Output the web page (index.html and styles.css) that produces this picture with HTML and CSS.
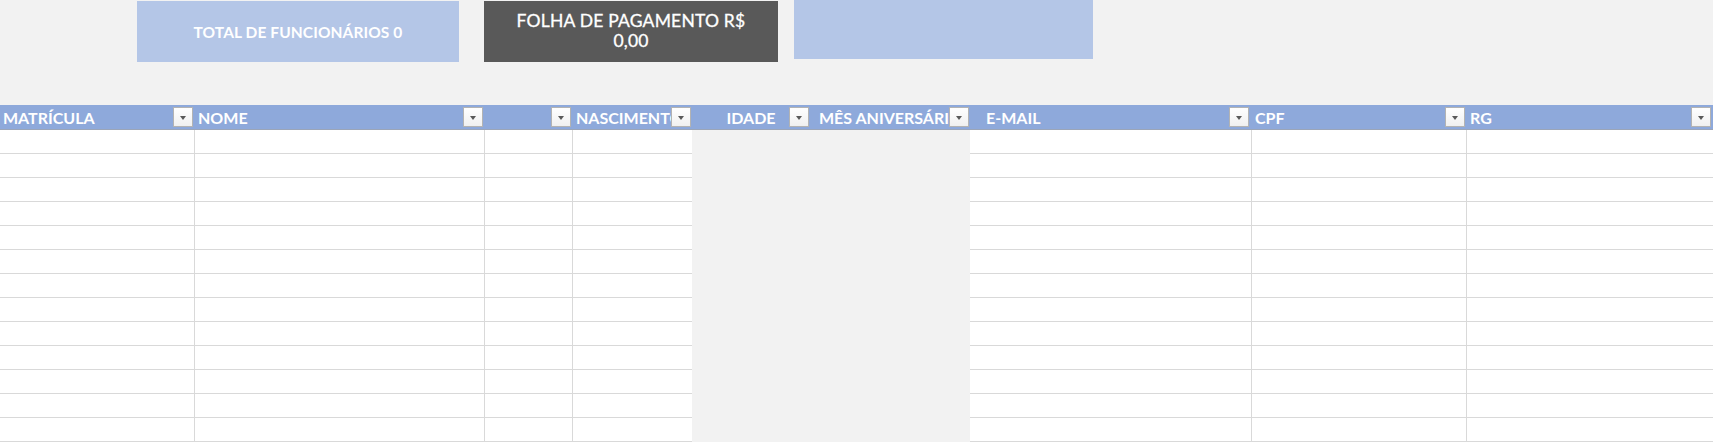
FILE: index.html
```html
<!DOCTYPE html>
<html lang="pt-BR">
<head>
<meta charset="utf-8">
<title>Funcionários</title>
<link rel="stylesheet" href="styles.css">
</head>
<body>
<div class="summary">
  <div class="card card-light">TOTAL DE FUNCIONÁRIOS 0</div>
  <div class="card card-dark">FOLHA DE PAGAMENTO R$<br>0,00</div>
  <div class="card card-light card-empty"></div>
</div>
<table class="sheet">
  <colgroup>
    <col class="w1"><col class="w2"><col class="w3"><col class="w4"><col class="w5"><col class="w6"><col class="w7"><col class="w8"><col class="w9">
  </colgroup>
  <thead>
    <tr>
      <th><span class="lbl">MATRÍCULA</span><span class="dd"></span></th>
      <th><span class="lbl pad4">NOME</span><span class="dd"></span></th>
      <th><span class="lbl"></span><span class="dd"></span></th>
      <th><span class="lbl pad4">NASCIMENTO</span><span class="dd"></span></th>
      <th class="center"><span class="lbl">IDADE</span><span class="dd"></span></th>
      <th><span class="lbl pad9">MÊS ANIVERSÁRIO</span><span class="dd"></span></th>
      <th><span class="lbl pad16">E-MAIL</span><span class="dd dd-right"></span></th>
      <th><span class="lbl pad4">CPF</span><span class="dd"></span></th>
      <th><span class="lbl pad4">RG</span><span class="dd dd-last"></span></th>
    </tr>
  </thead>
  <tbody id="rows"></tbody>
</table>
<script src="app.js"></script>
</body>
</html>
```
FILE: app.js
```js
(function () {
  var body = document.getElementById('rows');
  var html = '';
  for (var r = 0; r < 13; r++) {
    html += '<tr>' +
      '<td></td><td></td><td></td><td class="nb"></td>' +
      '<td class="gap"></td><td class="gap"></td>' +
      '<td></td><td></td><td></td></tr>';
  }
  body.innerHTML = html;
})();
```
FILE: styles.css
```css
* { box-sizing: border-box; }
html, body {
  margin: 0;
  padding: 0;
  background: #f2f2f2;
  width: 1713px;
  height: 442px;
  overflow: hidden;
  font-family: Lato, "Liberation Sans", Arial, sans-serif;
}
.summary {
  display: flex;
  align-items: flex-start;
  gap: 25px;
  padding: 1px 0 0 137px;
  height: 105px;
}
.card {
  height: 61px;
  display: flex;
  align-items: center;
  justify-content: center;
  text-align: center;
  color: #ffffff;
}
.card-light {
  background: #b4c6e7;
  width: 322px;
  font-weight: 700;
  font-size: 15.5px;
  letter-spacing: 0.1px;
}
.card-dark {
  background: #595959;
  width: 294px;
  font-size: 17.5px;
  font-weight: 400;
  line-height: 20px;
  padding-bottom: 1px;
  letter-spacing: 0.2px;
  -webkit-text-stroke: 0.3px #ffffff;
}
.card-empty {
  width: 299px;
  height: 59px;
  margin-top: -1px;
  margin-left: -9px;
}
.sheet {
  border-collapse: collapse;
  table-layout: fixed;
  width: 1713px;
}
.w1 { width: 194px; }
.w2 { width: 290px; }
.w3 { width: 88px; }
.w4 { width: 120px; }
.w5 { width: 118px; }
.w6 { width: 160px; }
.w7 { width: 281px; }
.w8 { width: 215px; }
.w9 { width: 247px; }
.sheet th {
  background: #8ea9db;
  height: 23px;
  padding: 0;
  border-bottom: 1px solid #9ba5b8;
  position: relative;
  overflow: hidden;
  white-space: nowrap;
  text-align: left;
  color: #ffffff;
  font-weight: 700;
  font-size: 16px;
  line-height: 23px;
}
.sheet th.center { text-align: center; }
.lbl { display: inline-block; padding-left: 3px; padding-top: 1px; }
.center .lbl { padding-left: 0; }
.pad4 { padding-left: 4px; }
.pad9 { padding-left: 9px; }
.pad16 { padding-left: 16px; }
.dd {
  position: absolute;
  right: 1px;
  top: 2px;
  width: 20px;
  height: 20px;
  border: 1px solid #b3b3b3;
  background: linear-gradient(#ffffff, #f0f0f0);
}
.dd::after {
  content: "";
  position: absolute;
  left: 6px;
  top: 8px;
  border-left: 3.5px solid transparent;
  border-right: 3.5px solid transparent;
  border-top: 4px solid #595959;
}
.dd-right { right: 2px; }
.dd-last { right: 2px; }
.sheet td {
  height: 24px;
  padding: 0;
  background: #ffffff;
  border-right: 1px solid #d9d9d9;
  border-bottom: 1px solid #d9d9d9;
}
.sheet td.nb { border-right: none; }
.sheet td.gap {
  background: #f2f2f2;
  border: none;
}
```
